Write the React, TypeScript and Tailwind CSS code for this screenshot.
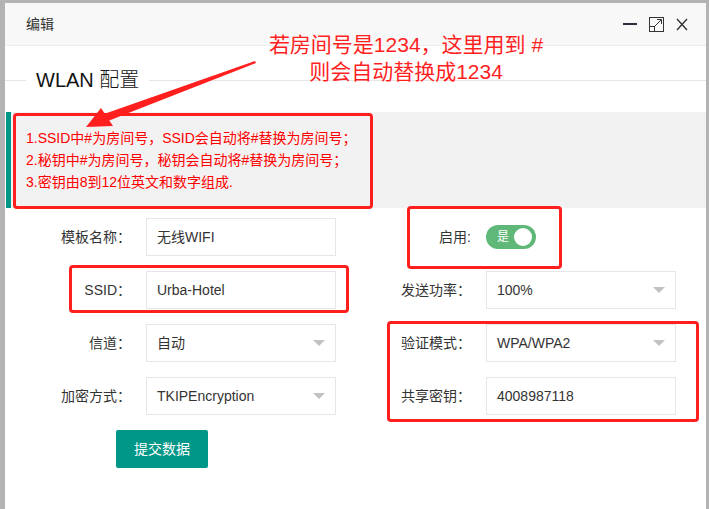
import React from "react";

const font = { fontFamily: '"Liberation Sans", "Noto Sans CJK SC", sans-serif' };

function TextInput({ value }: { value: string }) {
  return (
    <div className="flex h-[38px] w-[190px] items-center border border-[#e6e6e6] bg-white pl-[10px] text-[14px] text-[#333]">
      {value}
    </div>
  );
}

function SelectBox({ value }: { value: string }) {
  return (
    <div className="flex h-[38px] w-[190px] items-center justify-between border border-[#e6e6e6] bg-white pl-[10px] pr-[10px] text-[14px] text-[#333]">
      <span>{value}</span>
      <span className="h-0 w-0 border-x-[6px] border-t-[6px] border-x-transparent border-t-[#c2c2c2]" />
    </div>
  );
}

function Label({ text }: { text: string }) {
  return (
    <div className="w-[110px] pr-[15px] text-right text-[14px] leading-[20px] text-[#333]">{text}</div>
  );
}

export default function App() {
  return (
    <div className="relative h-[509px] w-[709px] overflow-hidden bg-[#b3b3b3] pl-[5px] pr-[3px] pt-[3px]" style={font}>
      <div className="h-full w-full bg-white">
        {/* title bar */}
        <div className="flex h-[43px] items-center justify-between border-b border-[#eee] bg-[#f8f8f8] pl-[21px] pr-[18px]">
          <span className="text-[14px] text-[#333]">编辑</span>
          <div className="flex items-center gap-[12px]">
            <div className="h-[2px] w-[14px] bg-[#2e2d3c]" />
            <svg width="15" height="15" viewBox="0 0 15 15" fill="none" stroke="#333" strokeWidth="1">
              <rect x="0.5" y="0.5" width="14" height="14" />
              <rect x="0.5" y="9.5" width="5" height="5" />
              <path d="M6 9 L12 3" />
              <path d="M8 2.5 H12.5 V7" />
            </svg>
            <svg width="12" height="13" viewBox="0 0 12 13" fill="none" stroke="#333" strokeWidth="1.4">
              <path d="M1 1 L11 12 M11 1 L1 12" />
            </svg>
          </div>
        </div>

        {/* fieldset title */}
        <div className="mt-[20px] flex h-[28px] items-center">
          <div className="h-px w-[21px] bg-[#e6e6e6]" />
          <div className="px-[10px] text-[20px] font-light text-[#111]">WLAN 配置</div>
          <div className="h-px flex-1 bg-[#e6e6e6]" />
        </div>

        {/* quote */}
        <div className="ml-[1px] mt-[18px] border-l-[5px] border-[#009688] bg-[#f2f2f2] p-[15px] text-[14px] leading-[22px] text-[#ff0000]">
          <div>1.SSID中#为房间号，SSID会自动将#替换为房间号；</div>
          <div>2.秘钥中#为房间号，秘钥会自动将#替换为房间号；</div>
          <div>3.密钥由8到12位英文和数字组成.</div>
        </div>

        {/* form */}
        <div className="mt-[10px] flex flex-col gap-[15px] pl-[31px]">
          <div className="flex items-center">
            <Label text="模板名称：" />
            <TextInput value="无线WIFI" />
            <div className="w-[40px]" />
            <Label text="启用:" />
            <div className="flex h-[24px] w-[50px] items-center justify-between rounded-full bg-[#5fb878] pl-[11px] pr-[4px]">
              <span className="text-[12px] text-white">是</span>
              <span className="h-[18px] w-[18px] rounded-full bg-white" />
            </div>
          </div>
          <div className="flex items-center">
            <Label text="SSID：" />
            <TextInput value="Urba-Hotel" />
            <div className="w-[40px]" />
            <Label text="发送功率：" />
            <SelectBox value="100%" />
          </div>
          <div className="flex items-center">
            <Label text="信道：" />
            <SelectBox value="自动" />
            <div className="w-[40px]" />
            <Label text="验证模式：" />
            <SelectBox value="WPA/WPA2" />
          </div>
          <div className="flex items-center">
            <Label text="加密方式：" />
            <SelectBox value="TKIPEncryption" />
            <div className="w-[40px]" />
            <Label text="共享密钥：" />
            <TextInput value="4008987118" />
          </div>
          <div className="pl-[80px]">
            <button className="h-[38px] rounded-[2px] bg-[#009688] px-[18px] text-[14px] text-white">提交数据</button>
          </div>
        </div>
      </div>

      {/* annotation overlays */}
      <div className="absolute left-[13px] top-[113px] h-[96px] w-[360px] rounded-[4px] border-[3px] border-[#ff1f1f]" />
      <div className="absolute left-[407px] top-[206px] h-[63px] w-[155px] rounded-[4px] border-[3px] border-[#ff1f1f]" />
      <div className="absolute left-[69px] top-[265px] h-[48px] w-[280px] rounded-[4px] border-[3px] border-[#ff1f1f]" />
      <div className="absolute left-[387px] top-[321px] h-[101px] w-[312px] rounded-[4px] border-[3px] border-[#ff1f1f]" />

      <div className="absolute left-[256px] top-[31px] w-[300px] text-center text-[21px] leading-[27px] text-[#ff1f1f]">
        <div>若房间号是1234，这里用到 #</div>
        <div>则会自动替换成1234</div>
      </div>

      <svg className="absolute left-0 top-0" width="709" height="509" viewBox="0 0 709 509">
        <polygon points="255,61 256,63 108,121 104,114" fill="#ff1f1f" />
        <polygon points="86,127 101,108 113,126" fill="#ff1f1f" />
      </svg>
    </div>
  );
}
